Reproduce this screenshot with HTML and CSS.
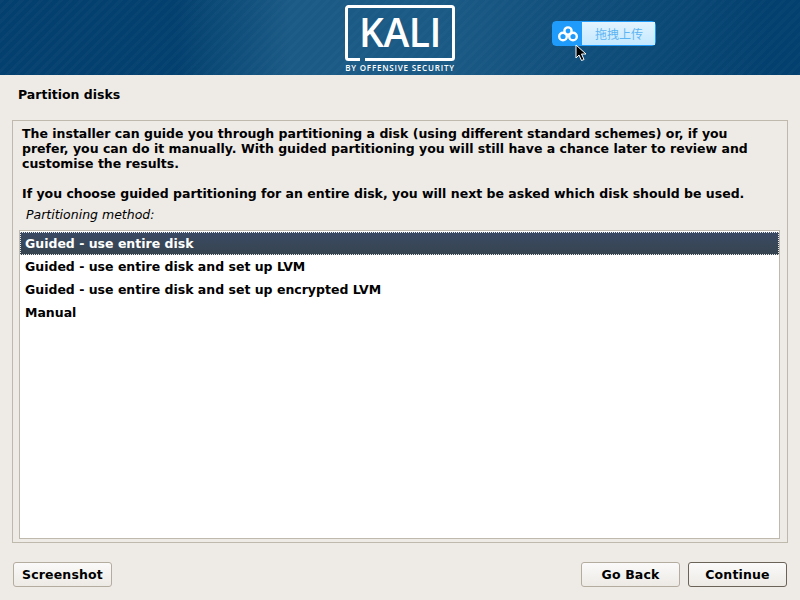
FILE: index.html
```html
<!DOCTYPE html>
<html lang="en">
<head>
  <meta charset="UTF-8">
  <title>Partition disks</title>
  <link rel="stylesheet" href="styles.css">
</head>
<body>

<header class="banner">
  <div class="logo">
    <svg class="logo-frame" width="110" height="56" viewBox="0 0 110 56">
      <path d="M15 54.5H3.5a2 2 0 0 1-2-2V3.5a2 2 0 0 1 2-2h103a2 2 0 0 1 2 2v49a2 2 0 0 1-2 2H20" fill="none" stroke="#fff" stroke-width="3"/>
    </svg>
    <div class="logo-word">KALI</div>
    <div class="logo-sub">BY OFFENSIVE SECURITY</div>
  </div>
  <div class="upload">
    <div class="upload-icon">
      <svg width="20" height="16" viewBox="0 0 20 16">
        <g fill="none" stroke="#fff" stroke-width="2.4">
          <circle cx="10" cy="5" r="3.6"/>
          <circle cx="5" cy="10.5" r="3.8"/>
          <circle cx="15" cy="10.5" r="3.8"/>
        </g>
      </svg>
    </div>
    <div class="upload-text">拖拽上传</div>
    <svg class="cursor" width="12" height="18" viewBox="0 0 12 18">
      <path d="M1 1v13l3-3 2.5 5.5 2.5-1L6.5 10H11z" fill="#000" stroke="#fff" stroke-width="1"/>
    </svg>
  </div>
</header>

<h1 class="page-title">Partition disks</h1>

<main class="panel">
  <p class="intro">The installer can guide you through partitioning a disk (using different standard schemes) or, if you prefer, you can do it manually. With guided partitioning you will still have a chance later to review and customise the results.</p>
  <p class="intro intro-second">If you choose guided partitioning for an entire disk, you will next be asked which disk should be used.</p>
  <div class="list-label">Partitioning method:</div>
  <ul class="method-list">
    <li class="method selected">Guided - use entire disk</li>
    <li class="method">Guided - use entire disk and set up LVM</li>
    <li class="method">Guided - use entire disk and set up encrypted LVM</li>
    <li class="method">Manual</li>
  </ul>
</main>

<footer class="actions">
  <button class="btn">Screenshot</button>
  <div class="actions-right">
    <button class="btn">Go Back</button>
    <button class="btn btn-default">Continue</button>
  </div>
</footer>

</body>
</html>
```

FILE: styles.css
```css
* {
  margin: 0;
  padding: 0;
  box-sizing: border-box;
}

body {
  width: 800px;
  height: 600px;
  overflow: hidden;
  background-color: #eeebe7;
  color: #000;
  font-family: "DejaVu Sans", sans-serif;
  font-size: 12.5px;
  display: flex;
  flex-direction: column;
}

.banner {
  height: 75px;
  flex-shrink: 0;
  display: flex;
  background-color: #03406f;
  background-image:
    repeating-linear-gradient(135deg, rgba(255, 255, 255, 0.02) 0 3px, transparent 3px 7px),
    linear-gradient(90deg, #04406f 0, #03406f 175px, #1a5a85 290px, #1a5a85 440px, #03406f 770px);
}

.logo {
  width: 110px;
  height: 75px;
  margin: 5px 0 0 345px;
  position: relative;
  color: #fff;
}

.logo-frame {
  display: block;
}

.logo-word {
  position: absolute;
  top: 4px;
  left: 0;
  width: 110px;
  text-align: center;
  font-family: "Open Sans", sans-serif;
  font-size: 39px;
  font-weight: 600;
  line-height: 46px;
  letter-spacing: -0.5px;
}

.logo-sub {
  position: absolute;
  top: 57px;
  left: 0;
  width: 110px;
  text-align: center;
  font-family: "Open Sans", sans-serif;
  font-size: 8px;
  line-height: 11px;
  font-weight: 600;
  letter-spacing: 0.8px;
  white-space: nowrap;
}

.upload {
  width: 104px;
  height: 25px;
  margin: 21px 0 0 97px;
  display: flex;
  position: relative;
  border: 1px solid #1e9bfb;
  border-radius: 4px;
}

.upload-icon {
  width: 29px;
  background-color: #1e9bfb;
  display: flex;
  align-items: center;
  justify-content: center;
}

.upload-text {
  flex-grow: 1;
  background: linear-gradient(#e2f4ff, #c4e8ff);
  color: #5db4f2;
  font-family: "Noto Sans CJK SC", sans-serif;
  font-size: 12px;
  line-height: 23px;
  text-align: center;
  padding-left: 1px;
}

.cursor {
  position: absolute;
  top: 22px;
  left: 22px;
}

.page-title {
  font-size: 12.5px;
  font-weight: bold;
  line-height: 16px;
  padding: 12px 0 0 18px;
}

.panel {
  width: 776px;
  height: 423px;
  margin: 17px 0 0 12px;
  padding: 5px 7px 3px 6px;
  border: 1px solid #bfb8ac;
  display: flex;
  flex-direction: column;
}

.intro {
  font-weight: bold;
  line-height: 15px;
  padding: 0 3px;
}

.intro-second {
  margin-top: 15px;
  white-space: nowrap;
}

.list-label {
  font-style: italic;
  line-height: 15px;
  padding-left: 7px;
  margin-top: 6px;
}

.method-list {
  list-style: none;
  flex-grow: 1;
  margin-top: 8px;
  padding-top: 1px;
  background-color: #fff;
  border: 1px solid #bfb8ac;
}

.method {
  height: 23px;
  line-height: 23px;
  padding-left: 5px;
  font-weight: bold;
}

.selected {
  background: linear-gradient(#3b4a64, #36444f);
  color: #fff;
  outline: 1px dotted #e8e8e8;
  outline-offset: -1px;
}

.actions {
  display: flex;
  justify-content: space-between;
  padding: 19px 13px 0 13px;
}

.actions-right {
  display: flex;
  gap: 8px;
}

.btn {
  width: 99px;
  height: 25px;
  font-family: "DejaVu Sans", sans-serif;
  font-size: 12.5px;
  font-weight: bold;
  letter-spacing: 0.15px;
  color: #000;
  background: linear-gradient(#fbfafa, #edeae5);
  border: 1px solid #b5aca0;
  border-radius: 3px;
}

.btn-default {
  border-color: #6b6258;
}
```
